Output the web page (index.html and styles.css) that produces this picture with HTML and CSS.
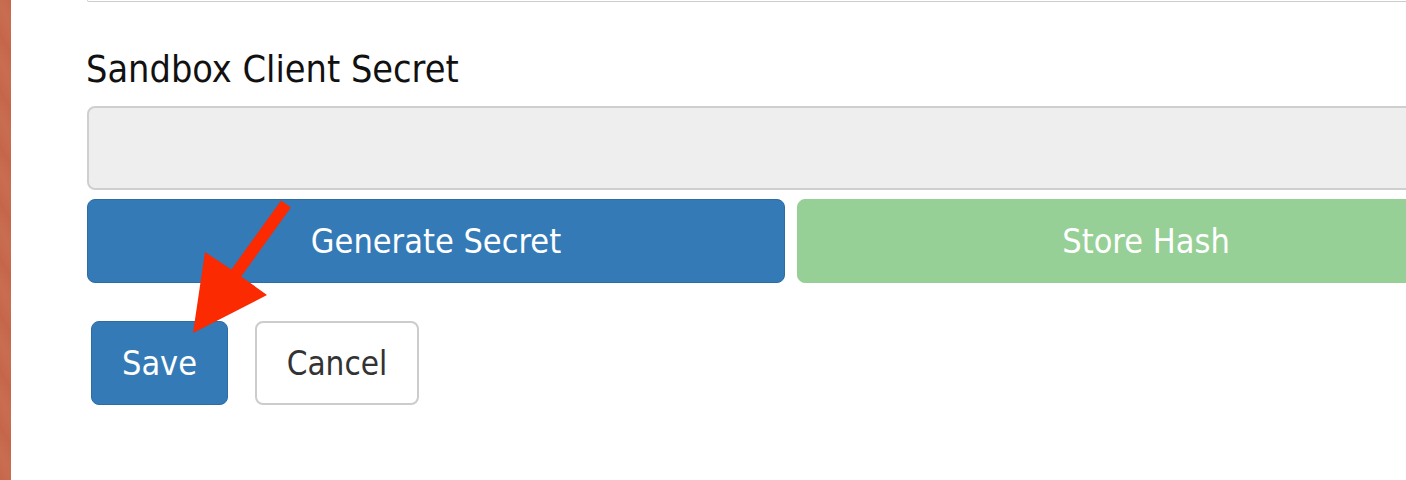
FILE: index.html
```html
<!DOCTYPE html>
<html>
<head>
<meta charset="utf-8">
<link rel="stylesheet" href="styles.css">
</head>
<body>
<div class="page">
  <div class="strip"></div>
  <div class="content">
    <div class="prev-input"></div>
    <label class="label">Sandbox Client Secret</label>
    <div class="input"></div>
    <div class="btn-row">
      <button class="btn btn-primary wide">Generate Secret</button>
      <button class="btn btn-success wide">Store Hash</button>
    </div>
    <div class="actions">
      <button class="btn btn-primary small">Save</button>
      <button class="btn btn-default small cancel">Cancel</button>
    </div>
  </div>
  <svg class="arrow" width="1406" height="480" viewBox="0 0 1406 480">
    <polygon fill="#fb2a00" points="281.1,200.5 290.9,207.5 241.2,276.4 267,295 193,333 205,252 231.4,269.4"/>
  </svg>
</div>
</body>
</html>
```

FILE: styles.css
```css
html, body {
  margin: 0;
  padding: 0;
  background: #fff;
  overflow: hidden;
  width: 1406px;
  height: 480px;
}
.page {
  position: relative;
  display: flex;
  height: 480px;
  overflow: hidden;
  font-family: "DejaVu Sans Condensed", "DejaVu Sans", sans-serif;
}
.strip {
  flex: 0 0 11px;
  background: repeating-linear-gradient(60deg, #c6674a 0px, #c96d50 14px, #c4654a 28px);
}
.content {
  flex: 0 0 auto;
  width: 1408px;
  padding-left: 76px;
  display: flex;
  flex-direction: column;
}
.prev-input {
  height: 1px;
  border: 1px solid #ccc;
  border-top: none;
  border-radius: 0 0 8px 8px;
  background: #fff;
}
.label {
  font-size: 37.5px;
  color: #111;
  margin: 46px 0 0 -1px;
  line-height: 42px;
  height: 42px;
}
.input {
  margin-top: 16px;
  height: 80px;
  background: #eeeeee;
  border: 2px solid #cfcfcf;
  border-radius: 8px;
}
.btn-row {
  margin-top: 9px;
  display: flex;
  gap: 12px;
}
.btn {
  font-family: inherit;
  border-radius: 8px;
  cursor: pointer;
  display: flex;
  align-items: center;
  justify-content: center;
  padding: 0;
}
.wide {
  flex: 1 1 0;
  height: 84px;
  font-size: 34px;
}
.btn-primary {
  background: #337ab7;
  border: 1px solid #2e6da4;
  color: #fff;
}
.btn-success {
  background: #96d096;
  border: 1px solid #96d096;
  color: #fff;
}
.btn-default {
  background: #fff;
  border: 2px solid #cccccc;
  color: #333;
}
.actions {
  margin-top: 38px;
  margin-left: 4px;
  display: flex;
  gap: 27px;
}
.small {
  height: 84px;
  font-size: 34px;
}
.cancel {
  font-size: 33px;
}
.actions .btn-primary {
  width: 137px;
}
.actions .btn-default {
  width: 164px;
}
.arrow {
  position: absolute;
  left: 0;
  top: 0;
  pointer-events: none;
}
```
